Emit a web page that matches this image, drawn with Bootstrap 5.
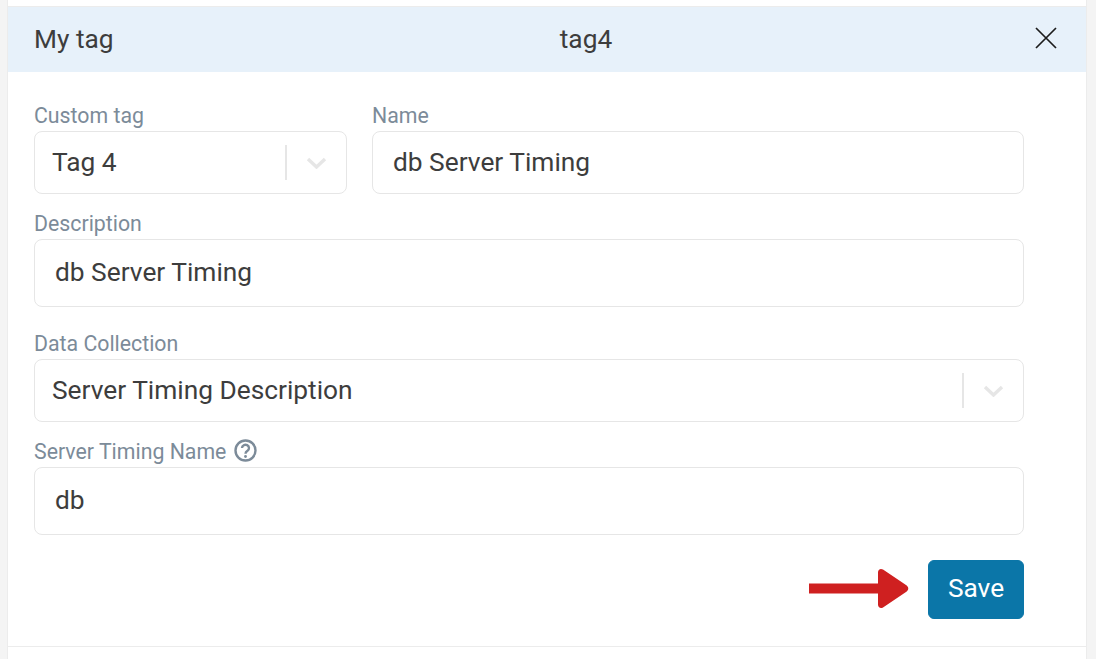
<!DOCTYPE html>
<html lang="en">
<head>
<meta charset="utf-8">
<title>My tag</title>
<link href="https://cdn.jsdelivr.net/npm/bootstrap@5.3.0/dist/css/bootstrap.min.css" rel="stylesheet">
<style>
html,body{height:100%;}
body{background:#f4f4f4;font-family:Roboto,"Liberation Sans",sans-serif;color:#3d3d3d;overflow:hidden;}
.sheet{width:1080px;height:659px;margin-left:7px;background:#fff;border-left:1px solid #ececec;border-right:1px solid #ececec;padding-top:6px;}
.sheet-inner{border-top:1px solid #ececec;border-bottom:1px solid #ececec;height:641px;}
.tag-head{height:65px;background:#e7f1fa;padding:0 29px 0 26px;font-size:26.300px;line-height:1;}
.tag-head .side{width:200px;}
.tag-title{margin-left:202px;width:300px;text-align:center;}
.close-x{width:22px;height:22px;display:block;margin:0 0 3px auto;}
.tag-form{padding:31px 62px 0 26px;}
.top-fields{gap:25px;}
.fld-label{display:block;color:#7c8b99;font-size:21.300px;line-height:24px;padding-top:1px;margin:0 0 3px;}
.fld{border:1px solid #e6e6e6;border-radius:8px;font-size:26.300px;color:#3d3d3d;background:#fff;padding:0 20px;display:flex;align-items:center;line-height:1.2;}
.fld-sel{height:63px;padding:0 17px;}
.fld-text{height:68px;}
.fld-short{height:63px;}
.sel-sep{width:2px;height:35px;background:#e6e6e6;margin-left:auto;}
.sel-caret{width:21px;height:12px;margin:0 2px 0 19px;}
.col-tag{width:313px;}
.mt-a{margin-top:17px;}
.mt-b{margin-top:24px;}
.mt-c{margin-top:17px;}
.hint{width:23px;height:23px;margin-left:8px;vertical-align:-3px;margin-top:-3px;}
.save-row{margin-top:25px;}
.arrow-red{width:100px;height:41px;margin:0 19px 2px 0;}
.btn-save{background:#0b76a8;border-color:#0b76a8;color:#fff;font-size:26.300px;width:96px;height:59px;border-radius:6px;padding:0 0 2px;}
</style>
</head>
<body>
<div class="sheet">
  <div class="sheet-inner">
    <div class="tag-head d-flex align-items-center">
      <div class="side">My tag</div>
      <div class="tag-title">tag4</div>
      <svg class="close-x" viewBox="0 0 22 22" aria-label="Close"><path d="M1 1 21 21M21 1 1 21" stroke="#1c1c1c" stroke-width="1.700" fill="none"/></svg>
    </div>
    <form class="tag-form">
      <div class="d-flex top-fields">
        <div class="col-tag flex-shrink-0">
          <label class="fld-label">Custom tag</label>
          <div class="fld fld-sel">Tag 4<span class="sel-sep"></span>
            <svg class="sel-caret" viewBox="0 0 21 12"><path d="M2 2 10.500 10 19 2" stroke="#e6e6e6" stroke-width="3.400" fill="none"/></svg></div>
        </div>
        <div class="flex-grow-1">
          <label class="fld-label">Name</label>
          <div class="fld fld-short">db Server Timing</div>
        </div>
      </div>
      <div class="mt-a">
        <label class="fld-label">Description</label>
        <div class="fld fld-text">db Server Timing</div>
      </div>
      <div class="mt-b">
        <label class="fld-label">Data Collection</label>
        <div class="fld fld-sel">Server Timing Description<span class="sel-sep"></span>
          <svg class="sel-caret" viewBox="0 0 21 12"><path d="M2 2 10.500 10 19 2" stroke="#e6e6e6" stroke-width="3.400" fill="none"/></svg></div>
      </div>
      <div class="mt-c">
        <label class="fld-label">Server Timing Name<svg class="hint" viewBox="0 0 23 23"><circle cx="11.500" cy="11.500" r="10" stroke="#7c8b99" stroke-width="2.400" fill="none"/><path d="M8 9a3.500 3.300 0 1 1 5.500 2.800c-1.300.9-2 1.500-2 3" stroke="#7c8b99" stroke-width="2.400" fill="none"/><circle cx="11.500" cy="17.500" r="1.400" fill="#7c8b99"/></svg></label>
        <div class="fld fld-text">db</div>
      </div>
      <div class="save-row d-flex justify-content-end align-items-center">
        <svg class="arrow-red" viewBox="0 0 100 41"><path d="M0 15.500H69V4.500C69 1.500 71.500 0 74 1.500L97 17C100 19 100 22 97 24L74 39.500C71.500 41 69 39.500 69 36.500V25.500H0Z" fill="#cf2020"/></svg>
        <button type="button" class="btn btn-save">Save</button>
      </div>
    </form>
  </div>
</div>
<script src="https://cdn.jsdelivr.net/npm/bootstrap@5.3.0/dist/js/bootstrap.bundle.min.js"></script>
</body>
</html>
